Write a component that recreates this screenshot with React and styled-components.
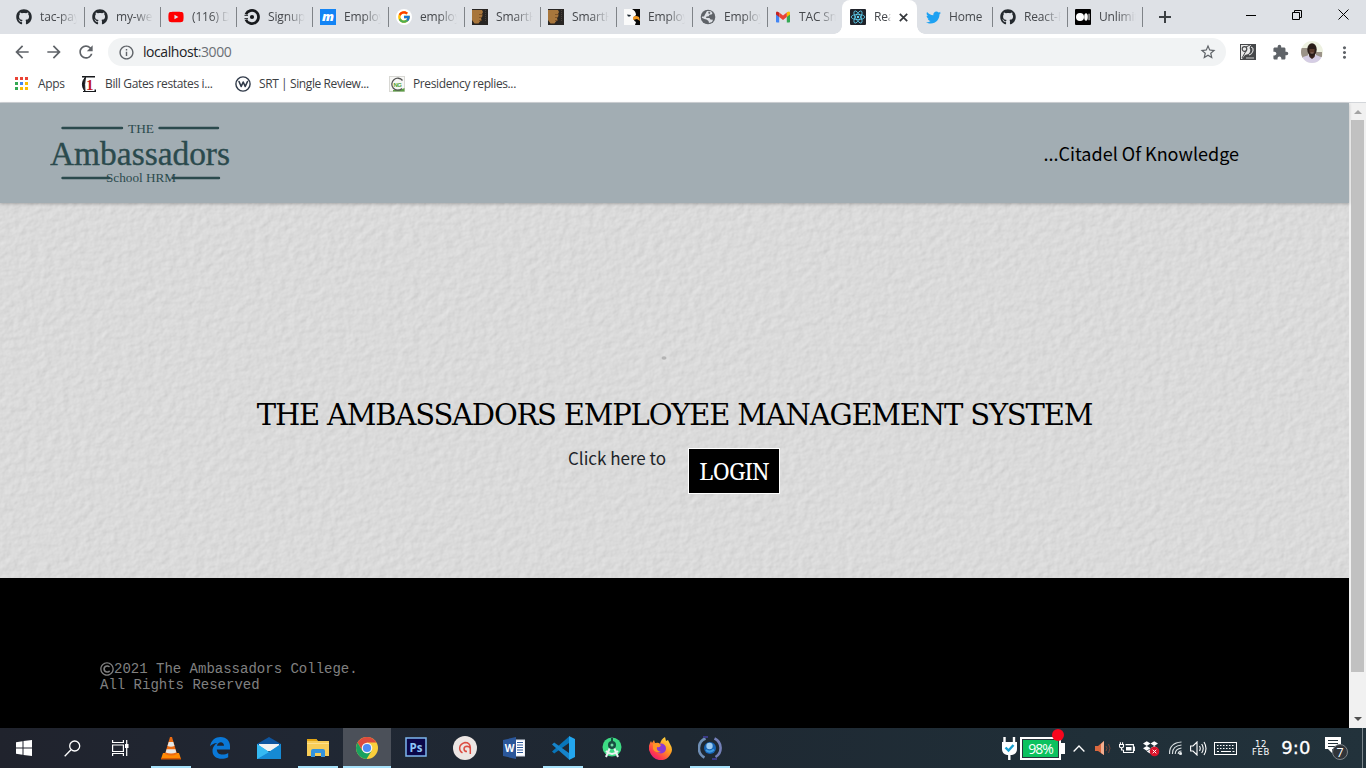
import React from "react";
import styled, { createGlobalStyle, css } from "styled-components";
import { FaGithub, FaYoutube, FaTwitter, FaDropbox, FaRegCopyright } from "react-icons/fa";
import { FcGoogle } from "react-icons/fc";
import { MdArrowBack, MdArrowForward, MdRefresh, MdInfoOutline, MdStarBorder, MdExtension, MdMoreVert } from "react-icons/md";

const Global = createGlobalStyle`
  * { box-sizing: border-box; }
  html, body { margin: 0; padding: 0; overflow: hidden; }
  svg { display: block; flex: none; }
`;

const Screen = styled.div`
  width: 1366px; height: 768px; display: flex; flex-direction: column;
  font-family: "Open Sans", "Noto Sans", sans-serif; overflow: hidden; background: #fff;
`;

/* ---------- tab strip ---------- */
const TabStrip = styled.div`
  height: 34px; background: #dee1e6; display: flex; padding-left: 8px; flex: none;
`;
const Tab = styled.div`
  position: relative; width: ${p => p.$w}px; height: 34px; flex: none;
  display: flex; align-items: center; padding-left: 8px; gap: 8px;
  ${p => p.$line && css`
    &::after { content: ""; position: absolute; right: -1px; top: 7px; width: 1px; height: 20px; background: #7f8388; }
  `}
  ${p => p.$active && css`
    background: #fff; border-radius: 8px 8px 0 0;
    &::before, &::after { content: ""; position: absolute; bottom: 0; width: 8px; height: 8px; }
    &::before { left: -8px; background: radial-gradient(circle at 0 0, transparent 7.5px, #fff 8px); }
    &::after { right: -8px; background: radial-gradient(circle at 100% 0, transparent 7.5px, #fff 8px); }
  `}
`;
const TabSlot = styled.span`width: 16px; display: flex; justify-content: center; flex: none;`;
const TabTitle = styled.span`
  width: ${p => p.$w}px; overflow: hidden; white-space: nowrap;
  font-size: 12px; line-height: 18px; letter-spacing: -0.15px; color: #45484c;
  mask-image: linear-gradient(90deg, #000 ${p => p.$solid || 50}%, transparent 100%);
`;
const Spacer = styled.div`flex: 1;`;
const NewTab = styled.div`width: 45px; display: flex; align-items: center; justify-content: center;`;
const WindowButton = styled.div`
  width: 46px; height: 29px; display: flex; align-items: center; justify-content: center;
`;

/* ---------- toolbar and bookmarks ---------- */
const Toolbar = styled.div`
  height: 36px; display: flex; align-items: center; padding-left: 6px; color: #5f6368; flex: none;
`;
const ToolButton = styled.div`
  width: 32px; height: 32px; display: flex; align-items: center; justify-content: center;
`;
const Omnibox = styled.div`
  width: 1118px; margin-left: 6px; margin-right: 6px; height: 28px; border-radius: 14px; background: #f1f3f4;
  display: flex; align-items: center; padding: 0 9px 0 10px; gap: 8px;
`;
const Url = styled.span`
  flex: 1; font-size: 14px; letter-spacing: -0.43px; color: #202124; padding-bottom: 1px;
  span { color: #6b6f74; }
`;
const Bookmarks = styled.div`
  height: 33px; flex: none; display: flex; padding: 0 0 5px 15px; align-items: center; border-bottom: 1px solid #d3d6da;
`;
const Bookmark = styled.div`
  width: ${p => p.$w}px; display: flex; align-items: center; gap: ${p => p.$gap || 8}px;
  font-size: 12px; letter-spacing: ${p => p.$ls || 0}px; color: #3c4043; white-space: nowrap; flex: none;
`;

/* ---------- page ---------- */
const Viewport = styled.div`height: 625px; display: flex; flex: none;`;
const Page = styled.div`width: 1349px; display: flex; flex-direction: column; flex: none;`;
const Header = styled.header`
  position: relative; z-index: 1; height: 100px; flex: none; background: #a2adb3;
  box-shadow: 0 1px 3px rgba(0,0,0,.25); display: flex; align-items: center;
  justify-content: space-between; padding: 0 110px 0 50px;
`;
const Motto = styled.div`
  font: 18px "Noto Sans CJK SC", sans-serif; color: #000; padding-bottom: 1px; white-space: nowrap;
`;
const Hero = styled.main`
  position: relative; height: 375px; flex: none; background: #dadada; overflow: hidden;
  display: flex; flex-direction: column; align-items: center;
`;
const Plaster = styled.svg`position: absolute; inset: 0;`;
const Title = styled.h1`
  position: relative; margin: 191px 0 0; height: 42px; line-height: 42px; white-space: nowrap;
  font-family: "DejaVu Serif", serif; font-size: 29px; font-weight: 400; color: #000;
  letter-spacing: -1.19px;
`;
const LoginRow = styled.div`position: relative; display: flex; margin-top: 12px; padding-right: 1px;`;
const Prompt = styled.span`
  font: 17px/20px "Noto Sans CJK SC", sans-serif; color: #212529; width: 120px; white-space: nowrap;
`;
const LoginButton = styled.button`
  width: 92px; height: 46px; border: 1px solid #fff; background: #000; color: #fff; padding: 0;
  font-family: "Noto Serif", "DejaVu Serif Condensed", "DejaVu Serif", serif; font-stretch: condensed;
  font-size: 23px; letter-spacing: -0.9px; line-height: 44px;
`;
const Footer = styled.footer`
  height: 150px; flex: none; background: #000; color: #808080; padding: 83px 0 0 100px;
  font: 14px/16px "Liberation Mono", monospace;
`;
const FooterLine = styled.div`display: flex; height: 16px; align-items: center;`;
const Scrollbar = styled.div`
  width: 17px; background: #f1f1f1; display: flex; flex-direction: column; align-items: center;
`;
const ScrollArrow = styled.div`height: 17px; display: flex; align-items: center;`;
const Thumb = styled.div`width: 13px; height: 552px; background: #c1c1c1;`;
const Track = styled.div`flex: 1;`;

/* ---------- taskbar ---------- */
const Taskbar = styled.div`
  height: 40px; flex: none; display: flex; color: #fff;
  background: linear-gradient(90deg, #20232d 0, #202733 22%, #1e2832 50%, #202f38 80%, #22323b 100%);
`;
const SysButton = styled.div`width: 48px; display: flex; align-items: center; justify-content: center;`;
const Apps = styled.div`display: flex; padding-left: 2px;`;
const AppButton = styled.div`
  position: relative; width: 49px; display: flex; align-items: center; justify-content: center;
  &::before { content: ""; position: absolute; inset: 0 0 0 1px; background: ${p => (p.$active ? "#4b5059" : "transparent")}; }
  &::after {
    content: ""; position: absolute; bottom: 0; height: 2px; background: #a6e1fa;
    left: ${p => (p.$active ? 1 : 5)}px; right: ${p => (p.$active ? 0 : 4)}px;
    display: ${p => (p.$open || p.$active ? "block" : "none")};
  }
  svg { position: relative; }
`;
const Tray = styled.div`margin-left: auto; display: flex; align-items: center; padding-right: 3px;`;
const TrayItem = styled.div`
  width: ${p => p.$w}px; display: flex; justify-content: center; align-items: center; padding-left: ${p => p.$shift || 0}px;
`;
const BatteryBox = styled.div`
  position: relative; width: 41px; height: 23px; border: 2px solid #fff; background: #0cc25f;
  box-shadow: inset 0 0 0 1px #26343b; font-size: 14px; letter-spacing: -1.1px; line-height: 19px; text-align: center;
  &::before { content: ""; position: absolute; right: -6px; top: 4px; width: 4px; height: 11px; background: #fff; }
  &::after { content: ""; position: absolute; right: -5px; top: -10px; width: 12px; height: 12px; border-radius: 50%; background: #f8061d; }
`;
const DateBox = styled.div`
  width: 34px; text-align: center; font: 8.5px/8px "DejaVu Sans", sans-serif; letter-spacing: 0.7px; padding-bottom: 1px;
`;
const Clock = styled.div`
  width: 36px; text-align: center; font: 18px/20px "DejaVu Sans", sans-serif; letter-spacing: 0.2px; -webkit-text-stroke: 0.3px #fff;
`;
const ShowDesktop = styled.div`width: 1px; height: 40px; background: #7c868c; margin-left: 10px;`;

/* ---------- favicons ---------- */
const CircleCi = () => (
  <svg width="16" height="16" viewBox="0 0 16 16" fill="none">
    <path d="M1.900 5.300A6.600 6.600 0 1 1 1.900 10.700" stroke="#17191c" strokeWidth="2.700" />
    <circle cx="8" cy="8" r="2.100" fill="#17191c" />
    <path d="M.5 6.300h3.500M.5 9.700h3.500" stroke="#17191c" strokeWidth="1" />
  </svg>
);
const LetterM = () => (
  <svg width="16" height="16"><rect width="16" height="16" fill="#1384f5" />
    <text x="8" y="12" textAnchor="middle" fontFamily="Open Sans, sans-serif" fontWeight="800" fontStyle="italic" fontSize="13" fill="#fff">m</text>
  </svg>
);
const GoogleDisc = () => (
  <svg width="16" height="16"><circle cx="8" cy="8" r="8" fill="#fff" /><g transform="translate(1 1)"><FcGoogle size={14} /></g></svg>
);
const Fist = () => (
  <svg width="16" height="16"><rect width="16" height="16" fill="#282523" />
    <path d="M0 1h10l1 2-1 2 .5 2-1.500 2 .5 2-2 2-1 1.500H2.500L0 11z" fill="#a8763c" />
    <path d="M7 5.500h4M7 8.500h3M7 11.500h3" stroke="#6b4522" strokeWidth=".7" />
    <path d="M13.500 1v12" stroke="#48413a" strokeDasharray="1 1" />
  </svg>
);
const Eagle = () => (
  <svg width="16" height="16"><rect width="16" height="16" fill="#080808" />
    <path d="M0 0h8q4 2 4 6l-3 3q1 3 3 4l-1 3H0z" fill="#fafafa" />
    <path d="M9 8q3-2 6 0l1 4-3-2-4 1z" fill="#f29a24" /><path d="M3 5.500l4 .5-1 1.500H4z" fill="#1c2730" />
  </svg>
);
const Globe = () => (
  <svg width="16" height="16" viewBox="0 0 16 16"><circle cx="8" cy="8" r="7.300" fill="#5f6368" />
    <path d="M7 2l4 .2 1.500 2-1 1.300-2 .2-.8 1.600-2.200.2L6 9h3.500l1 1.500 2.500.2-1 2.200-3 1-.5-2L6.500 10.500 4.500 10 1.800 8.800 2.200 7.500H4L5 5.500z" fill="#dee1e6" />
    <path d="M9 2.500l1.500 1.200L9.500 5 8 4z" fill="#5f6368" />
  </svg>
);
const Gmail = () => (
  <svg width="14" height="12" viewBox="0 0 14 12">
    <path d="M0 2v8.500c0 .8.500 1 1 1h2.200V5z" fill="#4285f4" /><path d="M14 2v8.500c0 .8-.5 1-1 1h-2.200V5z" fill="#34a853" />
    <path d="M10.800 1.200L13 .5c.7 0 1 .8 1 1.500v1.500L10.800 6z" fill="#fbbc04" />
    <path d="M3.200 1.500L1 .5C.3.500 0 1.300 0 2v1.500L3.200 6z" fill="#c5221f" />
    <path d="M3.200 1.500L7 4.500l3.800-3V6L7 9 3.200 6z" fill="#ea4335" />
  </svg>
);
const ReactMark = () => (
  <svg width="16" height="16" viewBox="0 0 16 16"><rect width="16" height="16" rx="1" fill="#20232a" />
    <g fill="none" stroke="#61dafb" strokeWidth=".75"><ellipse cx="8" cy="8" rx="6.800" ry="2.600" />
      <ellipse cx="8" cy="8" rx="6.800" ry="2.600" transform="rotate(60 8 8)" /><ellipse cx="8" cy="8" rx="6.800" ry="2.600" transform="rotate(120 8 8)" /></g>
    <circle cx="8" cy="8" r="1.200" fill="#61dafb" />
  </svg>
);
const Medium = () => (
  <svg width="16" height="16"><rect width="16" height="16" rx="1" fill="#000" /><circle cx="5" cy="8" r="4" fill="#fff" />
    <ellipse cx="11" cy="8" rx="1.800" ry="3.700" fill="#fff" /><rect x="13.500" y="4.700" width="1.100" height="6.500" fill="#ddd" />
  </svg>
);
const Gh = () => <FaGithub size={16} color="#24292e" />;
const Yt = () => <FaYoutube size={16} color="#f00" />;
const Tw = () => <FaTwitter size={15} color="#1da1f2" />;

const tabs = [
  [Gh, "tac-payroll"], [Gh, "my-web"], [Yt, "(116) Deploy"], [CircleCi, "Signup"], [LetterM, "Employee"],
  [GoogleDisc, "employee"], [Fist, "SmartHR"], [Fist, "SmartHR"], [Eagle, "Employee"], [Globe, "Employee"], [Gmail, "TAC Smart"],
];
const laterTabs = [[Tw, "Home"], [Gh, "React-Re"], [Medium, "Unlimited"]];

const Crest = () => (
  <svg width="182" height="70" viewBox="0 0 182 70" fill="#2b4a4d" fontFamily="'Liberation Serif', serif">
    <g stroke="#2b4a4d" strokeWidth="2.400" strokeLinecap="round"><path d="M12.500 10H72M109.500 10H168M12.500 60H59M123 60H169" /></g>
    <text x="78" y="15" fontSize="12.500" textLength="26" lengthAdjust="spacingAndGlyphs">THE</text>
    <text x="0" y="47" fontSize="33" textLength="180" lengthAdjust="spacingAndGlyphs" stroke="#2b4a4d" strokeWidth=".35">Ambassadors</text>
    <text x="56" y="63.500" fontSize="13" textLength="70" lengthAdjust="spacingAndGlyphs">School HRM</text>
  </svg>
);

const WallTexture = () => (
  <Plaster width="1349" height="375">
    <filter id="plaster" x="0" y="0" width="100%" height="100%" colorInterpolationFilters="sRGB">
      <feTurbulence type="fractalNoise" baseFrequency="0.12 0.14" numOctaves="3" seed="8" />
      <feColorMatrix values="0 0 0 0 0  0 0 0 0 0  0 0 0 0 0  1 0 0 0 0" />
      <feDiffuseLighting surfaceScale="0.36" diffuseConstant="1.06" lightingColor="#dedede">
        <feDistantLight azimuth="215" elevation="68" />
      </feDiffuseLighting>
    </filter>
    <rect width="1349" height="375" filter="url(#plaster)" />
    <ellipse cx="664" cy="155" rx="2.500" ry="1.800" fill="#b4b4b4" />
  </Plaster>
);

const Grid = () => (
  <svg width="14" height="14">
    {["#ea4335", "#ea4335", "#ea4335", "#34a853", "#4285f4", "#fbbc04", "#34a853", "#fbbc04", "#fbbc04"].map((c, i) => (
      <rect key={i} x={(i % 3) * 5} y={Math.floor(i / 3) * 5} width="3" height="3" fill={c} />
    ))}
  </svg>
);
const OneIcon = () => (
  <svg width="16" height="16"><path d="M1 0h13v1.500H1zM13.500 13.500H15V16H2v-1h11.500z" fill="#17191c" /><path d="M4.500 1Q-1.500 8 4 15.500q-1-7 .5-14.500z" fill="#17191c" stroke="#17191c" />
    <text x="8.500" y="13.500" textAnchor="middle" fontFamily="'Liberation Serif', serif" fontWeight="700" fontSize="15" fill="#bd1824">1</text>
  </svg>
);
const WIcon = () => (
  <svg width="16" height="16" fill="none" stroke="#303a49"><circle cx="8" cy="8" r="7.100" strokeWidth="1.400" />
    <path d="M4 5.500L6.200 10.500 8.200 6l2 4.500L12.500 5.500" strokeWidth="1.600" strokeLinejoin="round" strokeLinecap="round" />
  </svg>
);
const NgIcon = () => (
  <svg width="16" height="16"><rect x=".5" y=".5" width="15" height="15" fill="#f7f7f5" stroke="#d8d8d4" /><path d="M4 15.500h11.500V12q-4 2-11.500 2z" fill="#5ca044" />
    <path d="M13.500 4.500a6 6 0 1 0-.5 8" fill="none" stroke="#555" strokeWidth="1.300" />
    <text x="8.500" y="10.500" textAnchor="middle" fontFamily="Liberation Sans, sans-serif" fontWeight="700" fontSize="6" fill="#53a338">NG</text>
  </svg>
);
const Avatar = () => (
  <svg width="22" height="22" viewBox="0 0 22 22"><defs><clipPath id="face"><circle cx="11" cy="11" r="11" /></clipPath></defs>
    <g clipPath="url(#face)"><rect width="22" height="22" fill="#eef1e1" /><path d="M0 7h7v10H0zM15 11h6v5h-6z" fill="#9b9388" />
      <path d="M1 22l1-6 6-2h7l6 2.500V22z" fill="#d5cde4" /><path d="M7.500 12h7l-1 4-2.500 2-2.500-2z" fill="#37221b" />
      <ellipse cx="11" cy="8.500" rx="4.700" ry="6.300" fill="#291c18" /><path d="M8.500 8h5v3.500q-2.500 2-5 0z" fill="#5a3b2c" /><path d="M9.500 12h3" stroke="#a38a80" strokeWidth=".8" /></g>
  </svg>
);
const ExtIcon = () => (
  <svg width="16" height="16"><rect width="16" height="16" fill="#46484a" /><path d="M1 1h10l-1.500 3q2 3-1 6L5 11l-3 4H1z" fill="#e9e9e9" />
    <circle cx="4.500" cy="5" r="2.300" fill="none" stroke="#46484a" strokeWidth="1.200" /><path d="M6 3l4-2M6 7l-4 7M10 2.500q4-.5 3.500 3.500T9 11" fill="none" stroke="#46484a" /><path d="M11 3q3 .5 2 4t-4 4" fill="none" stroke="#eee" /><path d="M6 14h8" stroke="#ccc" /></svg>
);

/* ---------- taskbar drawings ---------- */
const WinLogo = () => <svg width="16" height="16" fill="#fff"><path d="M0 2.200L6.500 1.300v6.200H0zM7.500 1.100L16 0v7.500H7.500zM0 8.500h6.500v6.200L0 13.800zM7.500 8.500H16V16l-8.500-1.100z" /></svg>;
const Search = () => <svg width="17" height="17" fill="none" stroke="#fff" strokeWidth="1.300"><circle cx="10.700" cy="6" r="5" /><path d="M7 9.800L.7 16.200" /></svg>;
const TaskView = () => <svg width="17" height="16" fill="none" stroke="#fff" strokeWidth="1.200"><path d="M.6 0v2.500h10.800V0M.6 5h10.800v6.500H.6zM.6 16v-2.500h10.800V16M14.700 0v16" /><path d="M13 4h3.500v4H13z" fill="#fff" stroke="none" /></svg>;
const Vlc = () => <svg width="20" height="23" viewBox="0 0 20 23"><path d="M2 16h16l2 6H0z" fill="#ff8b05" /><path d="M0 21h20v1.500H0z" fill="#d95a00" /><path d="M9 0h2l5 17q-6 3-12 0z" fill="#ed6b12" /><path d="M7.700 5h4.600l1.200 4q-3.500 1.500-7 0zM5.600 12.200h8.800l1 3.300q-5.400 2-10.800 0z" fill="#e5e8e8" /></svg>;
const Edge = () => <svg width="20" height="22" viewBox="0 0 20 22"><path d="M0 9.500C1 3 5.500 0 10.500 0 17 0 20 4.500 20 9v3.500H6.800c.2 6 7.200 6 11.400 3.500v4.200C12 23.500 2.500 22 2.500 14 2.500 10 5 7 7.500 6 3.500 6 1 8 0 9.500zM7 8.800h7c0-5.200-6.500-4.500-7 0z" fill="#0a78d7" /></svg>;
const Mail = () => <svg width="24" height="22"><path d="M0 7L12 0l12 7v5H0z" fill="#0e559f" /><path d="M2 7h20v7H2z" fill="#f2f2f2" /><path d="M0 7l12 8 12-8v15H0z" fill="#2ba9ea" /><path d="M12 15L24 7v15H0z" fill="#168ad4" /><path d="M0 7l12 8L0 22z" fill="#35b9f2" /></svg>;
const Folder = () => <svg width="22" height="18"><path d="M0 0h9l2 2h11v15H0z" fill="#f8cd58" /><path d="M0 0h9.500l1 2H0z" fill="#e3a513" /><path d="M0 4h22v1H0z" fill="#ffe08a" /><path d="M4 18v-6q0-2 2-2h10q2 0 2 2v6h-4v-4H8v4z" fill="#3493dc" /></svg>;
const Chrome = () => <svg width="22" height="22" viewBox="0 0 22 22"><circle cx="11" cy="11" r="11" fill="#fbcf3b" /><path d="M1.500 5.500A11 11 0 0 1 20.500 5.500H11L6.500 14z" fill="#dc4b3e" /><path d="M1.500 5.500L6.300 13.700 11 16.500 15.500 14 10.500 22A11 11 0 0 1 1.500 5.500z" fill="#1aa15f" /><circle cx="11" cy="11" r="5.300" fill="#f5f5f5" /><circle cx="11" cy="11" r="4.100" fill="#4c8bf5" /></svg>;
const Photoshop = () => <svg width="22" height="23"><rect x="1" y="1" width="20" height="18" fill="#0b0749" stroke="#7eb7ee" strokeWidth="1.500" /><text x="11" y="14.500" textAnchor="middle" fontFamily="Open Sans, sans-serif" fontWeight="700" fontSize="11.500" fill="#8dc6f7">Ps</text></svg>;
const Disc = () => <svg width="24" height="24" fill="none"><circle cx="12" cy="12" r="12" fill="#ece6e4" /><path d="M9.500 16.800Q6.300 15 6.700 11.500T12 6.500q5 0 5.300 5V18M17.300 12.500q-.8-2.300-3.300-2.300-3 .2-3 2.700.2 2.700 3 2.700" stroke="#dc4d43" strokeWidth="1.500" /></svg>;
const Word = () => <svg width="22" height="22"><path d="M11 3h11v16H11z" fill="#fff" stroke="#d5dcea" /><path d="M14 5.500h6M14 8h6M14 10.500h6M14 13h6M14 15.500h6" stroke="#2b579a" strokeWidth="1.200" /><path d="M0 3L13 0v22L0 19z" fill="#2b579a" /><text x="6.500" y="15" textAnchor="middle" fontFamily="Open Sans, sans-serif" fontWeight="700" fontSize="10" fill="#fff">W</text></svg>;
const Code = () => <svg width="24" height="24" fill="none"><path d="M18 .5L1 15.500l2.200 2L18 7z" fill="#0875b9" /><path d="M18 23.500L1 8.500l2.200-2L18 17z" fill="#1684ca" /><path d="M18 0l6 3v18l-6 3z" fill="#23a6ee" /></svg>;
const Android = () => <svg width="20" height="22"><circle cx="10" cy="10" r="9.500" fill="#3ddc84" /><path d="M10 6L4 20M10 6l6 14M4 14q6 6 12 0" fill="none" stroke="#edf3f2" strokeWidth="2" /><circle cx="10" cy="8" r="4" fill="#174f41" /><circle cx="10" cy="8" r="1.500" fill="#73dca4" /><path d="M10 1v4" stroke="#174f41" strokeWidth="2" /></svg>;
const Firefox = () => <svg width="23" height="23" viewBox="0 0 23 23"><defs><linearGradient id="fox" x1="1" y1="0" x2="0.200" y2="1"><stop stopColor="#fff04c" /><stop offset=".45" stopColor="#ff9a21" /><stop offset=".8" stopColor="#ff3750" /><stop offset="1" stopColor="#e21684" /></linearGradient></defs><path d="M2 4l1 2 2-3 1 3q4-1 5 1 1-5 5-7l1 4 2-1 2 4q4 6 0 11-4 6-11 5T0 13q-1-4 2-9z" fill="url(#fox)" /><circle cx="12" cy="11.500" r="5" fill="#8b39d3" /><path d="M4 7q5-2 8 1-1 3-4 2-1 4 4 5-6 1-8-3z" fill="#ff9726" /></svg>;
const Orb = () => (
  <svg width="24" height="24" fill="none"><circle cx="12" cy="12" r="6" fill="#1764b5" /><circle cx="11.500" cy="10" r="3.200" fill="#9bcaf0" /><path d="M8 14q4 3.500 8-.5" stroke="#3f9be0" strokeWidth="2" />
    <path d="M7.500 2.500A10.500 10.500 0 0 0 6.500 21.500" stroke="#6f8fb5" strokeWidth="2.600" /><path d="M16.500 2.500A10.500 10.500 0 0 1 17.500 21" stroke="#7480b8" strokeWidth="2.600" /><path d="M5 1h5M14 23h5" stroke="#3a3a86" strokeWidth="2" /></svg>
);

const Plug = () => <svg width="17" height="23"><path d="M3.500 0v6M13 0v6M8.300 17v6" stroke="#fff" strokeWidth="2.400" /><path d="M1 5h15v7q0 5-5 6H6q-5-1-5-6z" fill="#fff" /><path d="M4.500 10.500l3 3 5-5.500" fill="none" stroke="#189fce" strokeWidth="2.400" /></svg>;
const Caret = () => <svg width="12" height="7" fill="none" stroke="#fff" strokeWidth="1.300"><path d="M.6 6.500L6 1l5.400 5.500" /></svg>;
const Horn = () => <svg width="16" height="15" fill="none"><path d="M0 5h3l6-5v14l-6-4H0z" fill="#d9683f" /><path d="M6 3l3-3v14l-3-2z" fill="#f2ad8e" /><path d="M11 5q2 2 0 5M13.500 3q3 4 0 9" stroke="#774336" /></svg>;
const PowerIcon = () => <svg width="16" height="12" fill="none" stroke="#fff" strokeWidth="1.100"><path d="M6.500 2.600h7.900v7.900H4.500V8M14.400 5h1v3.500h-1M.5 2.500h4v1.700q0 1.600-2 1.600t-2-1.600zM1.400.3v2.200M3.600.3v2.200M2.500 6v2h2" /><path d="M7 5h5.500v3.500H7z" fill="#fff" stroke="none" /></svg>;
const Dropbox = () => <svg width="17" height="17"><FaDropbox size={15} color="#fff" /><circle cx="11.500" cy="11.500" r="4.800" fill="#db132a" /><path d="M9.700 9.700l3.600 3.600m0-3.600l-3.600 3.600" stroke="#fff" /></svg>;
const Wifi = () => <svg width="13" height="14" fill="none" stroke="#dce2e4" strokeWidth="1.100"><path d="M.6 13Q0 2 12.500 1M3.500 13Q3 5 12.500 4M6.300 13Q6 8 12.500 7M9.200 13q0-3 3.300-3" /><circle cx="11.500" cy="12.500" r="1" fill="#fff" /></svg>;
const Volume = () => <svg width="17" height="15" fill="none" stroke="#fff" strokeWidth="1.100"><path d="M.6 5H3l4-4v13l-4-4H.6zM9.500 5q1.500 2.500 0 5M11.700 3q3 4.500 0 9M14 1q4 6.500 0 13" /></svg>;
const Keyboard = () => <svg width="23" height="13" fill="none" stroke="#fff"><rect x=".5" y=".5" width="22" height="12" /><path d="M3 3.500h17M3 6.500h17" strokeDasharray="1.500 1.500" /><path d="M3 9.500h2M7 9.500h10M18.500 9.500h2" /></svg>;
const Notes = () => <svg width="26" height="24"><path d="M1 1h16v12h-9v4l-4-4H1z" fill="#fff" /><path d="M4 4.500h10M4 7.500h10M4 10.500h7" stroke="#23313a" /><circle cx="16" cy="16" r="7.500" fill="#303439" stroke="#7e858a" /><text x="16" y="20.500" textAnchor="middle" fontFamily="Open Sans, sans-serif" fontSize="12.500" fill="#fff">7</text></svg>;

const apps = [
  [Vlc, "open"], [Edge], [Mail], [Folder, "open"], [Chrome, "active"], [Photoshop], [Disc], [Word], [Code, "open"], [Android], [Firefox], [Orb, "open"],
];

export default function App() {
  return (
    <Screen>
      <Global />
      <TabStrip>
        {tabs.map(([Icon, title], i) => (
          <Tab key={i} $w={i < 9 ? 76 : 75} $line={i < 10}>
            <TabSlot><Icon /></TabSlot><TabTitle $w={37}>{title}</TabTitle>
          </Tab>
        ))}
        <Tab $w={75} $active>
          <TabSlot><ReactMark /></TabSlot><TabTitle $w={17} $solid={80}>React</TabTitle>
          <svg width="9" height="9" stroke="#34373b" strokeWidth="1.700"><path d="M.8.8l7.400 7.400m0-7.400L.8 8.200" /></svg>
        </Tab>
        {laterTabs.map(([Icon, title], i) => (
          <Tab key={i} $w={75} $line>
            <TabSlot><Icon /></TabSlot><TabTitle $w={37} $solid={title === "Home" ? 85 : 50}>{title}</TabTitle>
          </Tab>
        ))}
        <NewTab><svg width="12" height="12" stroke="#3c4043" strokeWidth="2"><path d="M6 0v12M0 6h12" /></svg></NewTab>
        <Spacer />
        <WindowButton><svg width="10" height="10" stroke="#000"><path d="M0 5.500h10" /></svg></WindowButton>
        <WindowButton><svg width="10" height="10" fill="none" stroke="#000"><path d="M.5 2.500h7v7h-7zM2.500 2.500v-2h7v7h-2" /></svg></WindowButton>
        <WindowButton><svg width="11" height="11" stroke="#000"><path d="M.5.500l10 10m0-10l-10 10" /></svg></WindowButton>
      </TabStrip>

      <Toolbar>
        <ToolButton><MdArrowBack size={20} /></ToolButton>
        <ToolButton><MdArrowForward size={20} /></ToolButton>
        <ToolButton><MdRefresh size={20} /></ToolButton>
        <Omnibox>
          <MdInfoOutline size={17} />
          <Url>localhost<span>:3000</span></Url>
          <MdStarBorder size={18} />
        </Omnibox>
        <ToolButton><ExtIcon /></ToolButton>
        <ToolButton><MdExtension size={17} /></ToolButton>
        <ToolButton><Avatar /></ToolButton>
        <ToolButton><MdMoreVert size={19} /></ToolButton>
      </Toolbar>
      <Bookmarks>
        <Bookmark $w={66} $gap={9} $ls={-0.3}><Grid />Apps</Bookmark>
        <Bookmark $w={154} $ls={-0.34}><OneIcon />Bill Gates restates i...</Bookmark>
        <Bookmark $w={154} $ls={-0.4}><WIcon />SRT | Single Review...</Bookmark>
        <Bookmark $w={140} $ls={-0.38}><NgIcon />Presidency replies...</Bookmark>
      </Bookmarks>

      <Viewport>
        <Page>
          <Header><Crest /><Motto>...Citadel Of Knowledge</Motto></Header>
          <Hero>
            <WallTexture />
            <Title>THE AMBASSADORS EMPLOYEE MANAGEMENT SYSTEM</Title>
            <LoginRow><Prompt>Click here to</Prompt><LoginButton>LOGIN</LoginButton></LoginRow>
          </Hero>
          <Footer>
            <FooterLine><FaRegCopyright size={14} />2021 The Ambassadors College.</FooterLine>
            <FooterLine>All Rights Reserved</FooterLine>
          </Footer>
        </Page>
        <Scrollbar>
          <ScrollArrow><svg width="8" height="5"><path d="M0 5l4-4 4 4z" fill="#a3a3a3" /></svg></ScrollArrow>
          <Thumb /><Track />
          <ScrollArrow><svg width="8" height="5"><path d="M0 0l4 4 4-4z" fill="#505050" /></svg></ScrollArrow>
        </Scrollbar>
      </Viewport>

      <Taskbar>
        <SysButton><WinLogo /></SysButton><SysButton><Search /></SysButton><SysButton><TaskView /></SysButton>
        <Apps>
          {apps.map(([Icon, state], i) => (
            <AppButton key={i} $open={state === "open"} $active={state === "active"}><Icon /></AppButton>
          ))}
        </Apps>
        <Tray>
          <TrayItem $w={21}><Plug /></TrayItem>
          <BatteryBox>98%</BatteryBox>
          <TrayItem $w={35}><Caret /></TrayItem>
          <TrayItem $w={14}><Horn /></TrayItem>
          <TrayItem $w={33}><PowerIcon /></TrayItem>
          <TrayItem $w={16}><Dropbox /></TrayItem>
          <TrayItem $w={32}><Wifi /></TrayItem>
          <TrayItem $w={15}><Volume /></TrayItem>
          <TrayItem $w={38}><Keyboard /></TrayItem>
          <DateBox>12<br />FEB</DateBox>
          <Clock>9:0</Clock>
          <TrayItem $w={38} $shift={8}><Notes /></TrayItem>
          <ShowDesktop />
        </Tray>
      </Taskbar>
    </Screen>
  );
}
